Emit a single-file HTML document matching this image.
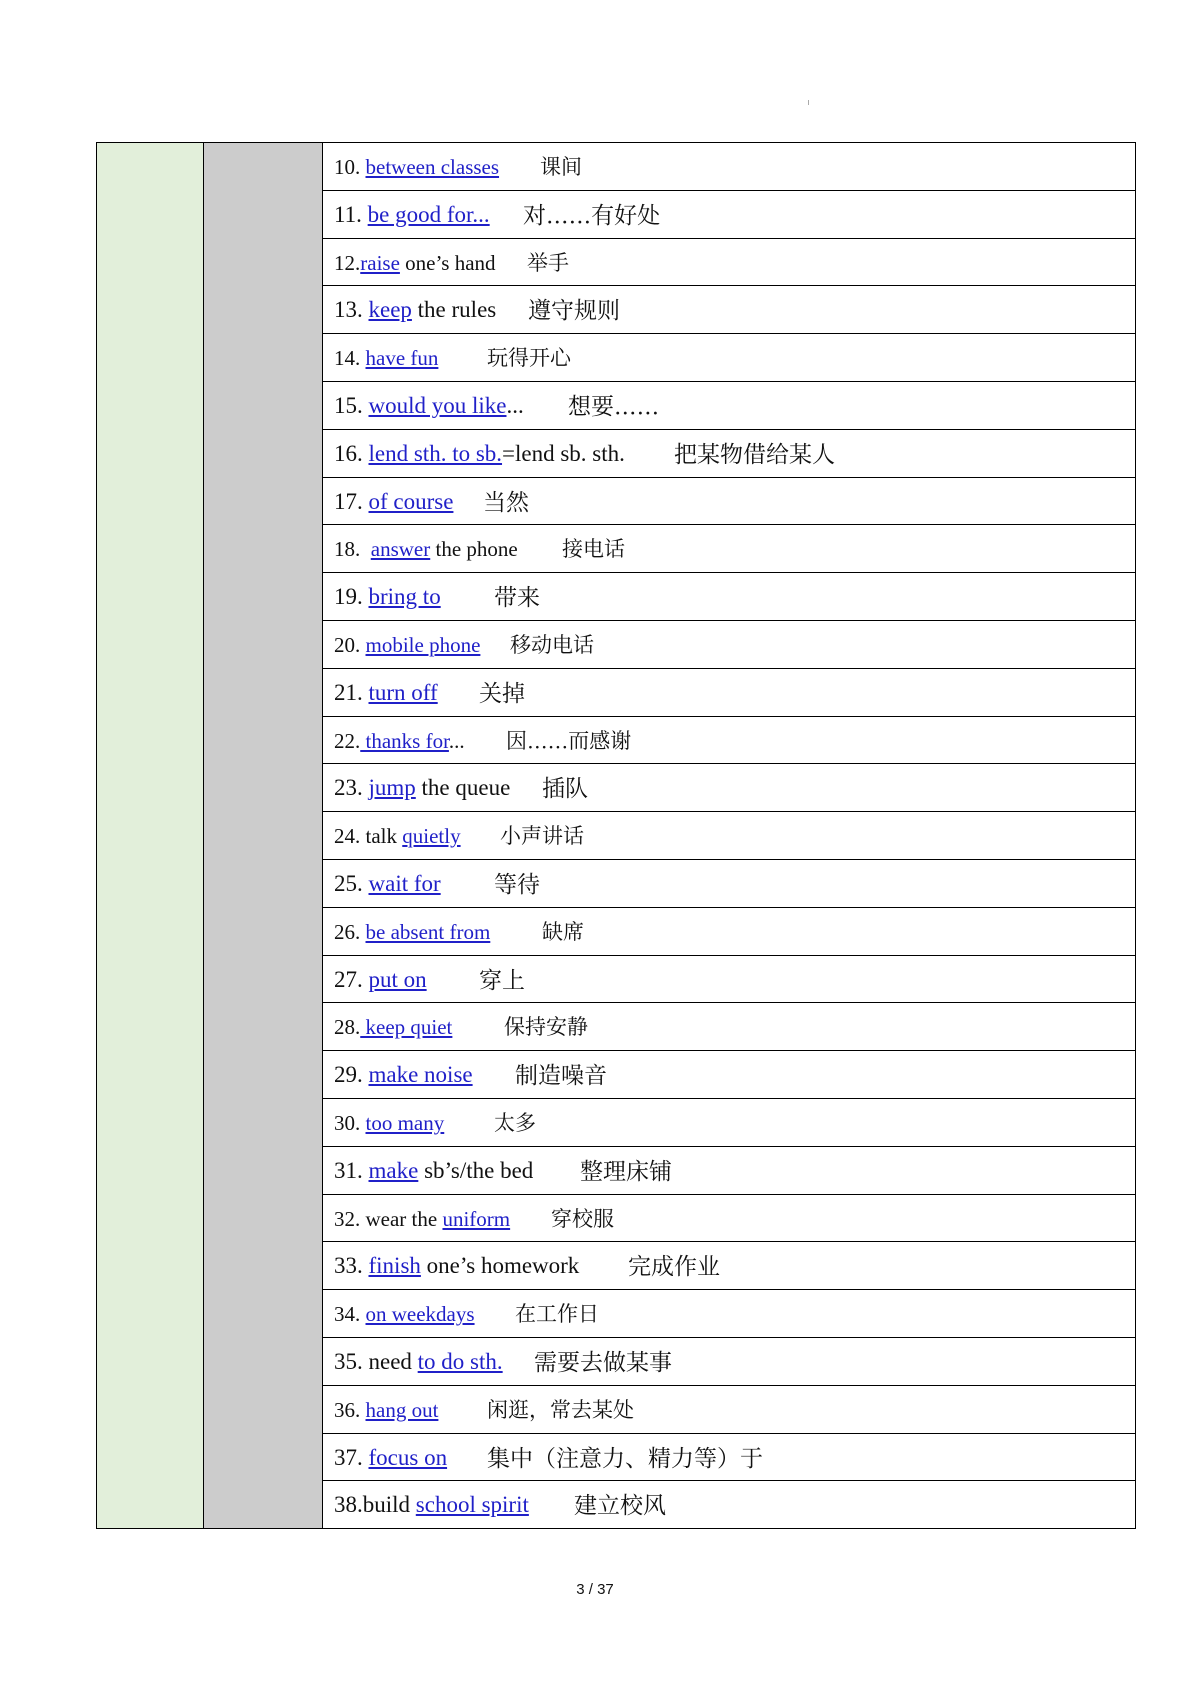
<!DOCTYPE html>
<html><head><meta charset="utf-8"><style>
body{margin:0;width:1190px;height:1683px;background:#fff;position:relative;font-family:"Liberation Serif","Noto Serif CJK SC",serif;}
.g{position:absolute;left:96px;top:142px;width:107px;height:1385px;background:#e2efda;border:1px solid #000;border-right:none}
.h{position:absolute;left:203px;top:142px;width:119px;height:1385px;background:#cccccc;border:1px solid #000;border-right:none}
.t{position:absolute;left:322px;top:142px;width:812px;height:1385px;border:1px solid #000;}
.r{position:absolute;left:0;width:812px;height:47.8px;border-bottom:1px solid #000;box-sizing:border-box;}
.r:last-child{border-bottom:none}
.e{position:absolute;left:11px;top:12px;font-size:21px;color:#111;white-space:nowrap}
.b .e{font-size:23px;top:11px}
.c{position:absolute;top:8px;font-size:21px;color:#111;white-space:nowrap;font-family:"Noto Serif CJK SC","Noto Sans CJK SC",serif}
.b .c{font-size:23px;top:6px}
u{color:#2020c8;text-decoration-color:#2020c8}
.pn{position:absolute;left:0;width:1190px;top:1581px;text-align:center;font-family:"Liberation Sans",sans-serif;font-size:15px;color:#111}
</style></head><body>
<div style="position:absolute;left:808px;top:100px;width:1px;height:5px;background:#aaa"></div>
<div class="g"></div><div class="h"></div>
<div class="t">
<div class="r" style="top:0px"><span class="e">10. <u>between classes</u></span><span class="c" style="left:217px">课间</span></div>
<div class="r b" style="top:47.8px"><span class="e">11. <u>be good for...</u></span><span class="c" style="left:200px">对......有好处</span></div>
<div class="r" style="top:95.6px"><span class="e">12.<u>raise</u> one’s hand</span><span class="c" style="left:204px">举手</span></div>
<div class="r b" style="top:143.4px"><span class="e">13. <u>keep</u> the rules</span><span class="c" style="left:205px">遵守规则</span></div>
<div class="r" style="top:191.2px"><span class="e">14. <u>have fun</u></span><span class="c" style="left:164px">玩得开心</span></div>
<div class="r b" style="top:239px"><span class="e">15. <u>would you like</u>...</span><span class="c" style="left:245px">想要......</span></div>
<div class="r b" style="top:286.8px"><span class="e">16. <u>lend sth. to sb.</u>=lend sb. sth.</span><span class="c" style="left:351px">把某物借给某人</span></div>
<div class="r b" style="top:334.6px"><span class="e">17. <u>of course</u></span><span class="c" style="left:160px">当然</span></div>
<div class="r" style="top:382.4px"><span class="e">18. &nbsp;<u>answer</u> the phone</span><span class="c" style="left:239px">接电话</span></div>
<div class="r b" style="top:430.2px"><span class="e">19. <u>bring to</u></span><span class="c" style="left:171px">带来</span></div>
<div class="r" style="top:478px"><span class="e">20. <u>mobile phone </u></span><span class="c" style="left:187px">移动电话</span></div>
<div class="r b" style="top:525.8px"><span class="e">21. <u>turn off</u></span><span class="c" style="left:156px">关掉</span></div>
<div class="r" style="top:573.6px"><span class="e">22.<u> thanks for</u>...</span><span class="c" style="left:183px">因......而感谢</span></div>
<div class="r b" style="top:621.4px"><span class="e">23. <u>jump</u> the queue</span><span class="c" style="left:219px">插队</span></div>
<div class="r" style="top:669.2px"><span class="e">24. talk <u>quietly</u></span><span class="c" style="left:177px">小声讲话</span></div>
<div class="r b" style="top:717px"><span class="e">25. <u>wait for</u></span><span class="c" style="left:171px">等待</span></div>
<div class="r" style="top:764.8px"><span class="e">26. <u>be absent from </u></span><span class="c" style="left:219px">缺席</span></div>
<div class="r b" style="top:812.6px"><span class="e">27. <u>put on</u></span><span class="c" style="left:156px">穿上</span></div>
<div class="r" style="top:860.4px"><span class="e">28.<u> keep quiet</u></span><span class="c" style="left:181px">保持安静</span></div>
<div class="r b" style="top:908.2px"><span class="e">29. <u>make noise</u></span><span class="c" style="left:192px">制造噪音</span></div>
<div class="r" style="top:956px"><span class="e">30. <u>too many </u></span><span class="c" style="left:171px">太多</span></div>
<div class="r b" style="top:1003.8px"><span class="e">31. <u>make</u> sb’s/the bed</span><span class="c" style="left:257px">整理床铺</span></div>
<div class="r" style="top:1051.6px"><span class="e">32. wear the <u>uniform</u></span><span class="c" style="left:228px">穿校服</span></div>
<div class="r b" style="top:1099.4px"><span class="e">33. <u>finish</u> one’s homework</span><span class="c" style="left:305px">完成作业</span></div>
<div class="r" style="top:1147.2px"><span class="e">34. <u>on weekdays</u></span><span class="c" style="left:192px">在工作日</span></div>
<div class="r b" style="top:1195px"><span class="e">35. need <u>to do sth.</u></span><span class="c" style="left:211px">需要去做某事</span></div>
<div class="r" style="top:1242.8px"><span class="e">36. <u>hang out</u></span><span class="c" style="left:164px">闲逛，常去某处</span></div>
<div class="r b" style="top:1290.6px"><span class="e">37. <u>focus on</u></span><span class="c" style="left:164px">集中（注意力、精力等）于</span></div>
<div class="r b" style="top:1338.4px"><span class="e">38.build <u>school spirit</u></span><span class="c" style="left:251px">建立校风</span></div>
</div>
<div class="pn">3 / 37</div>
</body></html>
